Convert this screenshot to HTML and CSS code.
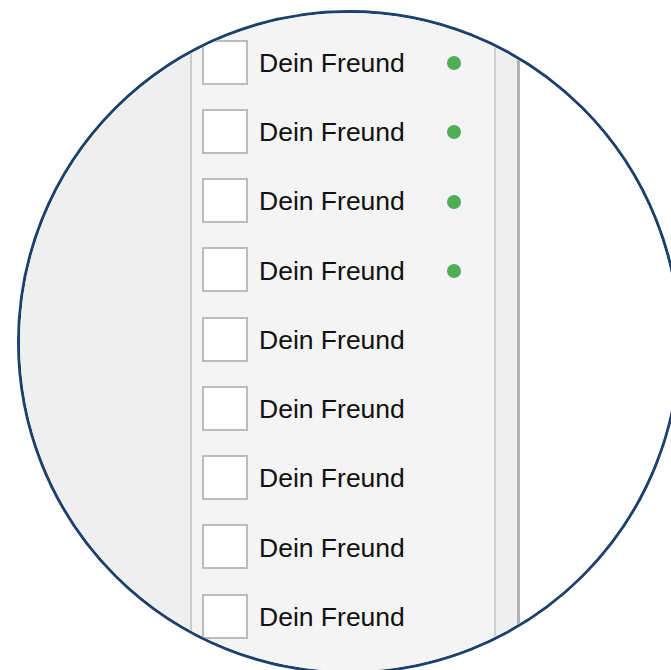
FILE: index.html
```html
<!DOCTYPE html>
<html lang="de">
<head>
<meta charset="utf-8">
<title>Freunde</title>
<link rel="stylesheet" href="styles.css">
</head>
<body>
<div class="lens">
  <div class="view">
    <div class="side"></div>
    <div class="panel">
      <div class="row"><span class="box"></span><span class="name">Dein Freund</span><span class="dot"></span></div>
      <div class="row"><span class="box"></span><span class="name">Dein Freund</span><span class="dot"></span></div>
      <div class="row"><span class="box"></span><span class="name">Dein Freund</span><span class="dot"></span></div>
      <div class="row"><span class="box"></span><span class="name">Dein Freund</span><span class="dot"></span></div>
      <div class="row"><span class="box"></span><span class="name">Dein Freund</span></div>
      <div class="row"><span class="box"></span><span class="name">Dein Freund</span></div>
      <div class="row"><span class="box"></span><span class="name">Dein Freund</span></div>
      <div class="row"><span class="box"></span><span class="name">Dein Freund</span></div>
      <div class="row"><span class="box"></span><span class="name">Dein Freund</span></div>
    </div>
    <div class="strip"></div>
    <div class="rest"></div>
  </div>
</div>
</body>
</html>
```

FILE: styles.css
```css
html, body {
  margin: 0;
  padding: 0;
  background: #ffffff;
  overflow: hidden;
}

body {
  width: 671px;
  height: 670px;
  font-family: "Liberation Sans", Arial, sans-serif;
}

.lens {
  margin-left: 17px;
  margin-top: 10px;
  width: 658px;
  height: 658px;
  border: 3px solid #1b416c;
  border-radius: 50%;
  overflow: hidden;
  background: #ffffff;
}

.view {
  display: flex;
  height: 100%;
}

.side {
  width: 170px;
  flex-shrink: 0;
  background: #efefef;
}

.panel {
  width: 292px;
  flex-shrink: 0;
  background: #f4f4f4;
  border-left: 2px solid #cbcbcb;
  border-right: 2px solid #cfcfcf;
  padding-top: 14.5px;
  padding-left: 10px;
  box-sizing: content-box;
}

.row {
  display: flex;
  align-items: center;
  height: 69.25px;
}

.box {
  width: 42px;
  height: 41px;
  flex-shrink: 0;
  border: 2px solid #bcbcbc;
  background: #ffffff;
  margin-right: 11px;
}

.name {
  width: 188px;
  flex-shrink: 0;
  font-size: 26.5px;
  color: #111111;
  line-height: 1;
  margin-top: 2px;
}

.dot {
  width: 14px;
  height: 14px;
  border-radius: 50%;
  background: #4fae55;
  margin-top: 2px;
}

.strip {
  width: 21px;
  flex-shrink: 0;
  background: #efefef;
  border-right: 3px solid #b3b3b3;
}

.rest {
  flex: 1;
  background: #ffffff;
}
```
